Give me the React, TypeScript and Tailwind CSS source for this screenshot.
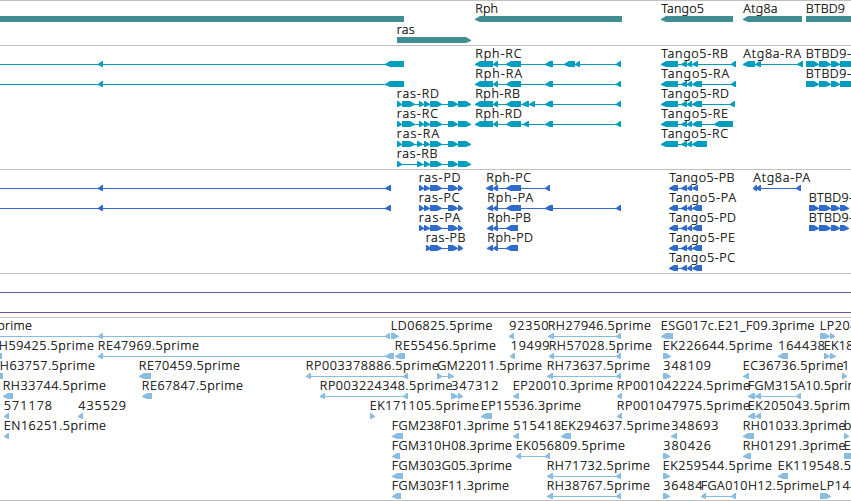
type Dir = "l" | "r";

interface Feature {
  row: number;
  dir: Dir;
  exons: [number, number][];
  label?: string;
  // Left and right edge of the label
  at?: [number, number];
}

interface TrackProps {
  features: Feature[];
  fill: string;
  height: string;
  labelY: number;
  pitch?: number;
}

const GENES: Feature[] = [
  { row: 0, dir: "l", exons: [[-10, 404]] },
  { row: 0, dir: "l", exons: [[475, 622]], label: "Rph", at: [475, 498] },
  { row: 0, dir: "l", exons: [[661, 733]], label: "Tango5", at: [661, 704] },
  { row: 0, dir: "l", exons: [[743, 802]], label: "Atg8a", at: [743, 777.5] },
  { row: 0, dir: "r", exons: [[806, 860]], label: "BTBD9", at: [805.5, 845] },
  { row: 1, dir: "r", exons: [[397, 471]], label: "ras", at: [396.5, 414.5] },
];

const TRANSCRIPTS: Feature[] = [
  { row: 0, dir: "l", exons: [[-10, -4], [98, 103], [385, 404]] },
  { row: 1, dir: "l", exons: [[-10, -4], [98, 103], [385, 404]] },
  { row: 0, dir: "l", label: "Rph-RC", at: [475, 521.5], exons: [[475, 493], [493, 498], [506, 521], [545, 553], [564, 575], [575, 580], [616, 621]] },
  { row: 1, dir: "l", label: "Rph-RA", at: [475, 522], exons: [[475, 493], [493, 498], [506, 521], [545, 553], [616, 621]] },
  { row: 2, dir: "l", label: "Rph-RB", at: [475, 520], exons: [[475, 493], [493, 498], [506, 521], [522, 529], [529, 535], [545, 553], [616, 621]] },
  { row: 3, dir: "l", label: "Rph-RD", at: [475, 522], exons: [[475, 493], [493, 498], [506, 521], [523, 529], [545, 553], [616, 621]] },
  { row: 2, dir: "r", label: "ras-RD", at: [396.5, 439], exons: [[397, 402], [402, 415], [419, 424], [424, 430], [430, 442], [448, 458], [458, 471]] },
  { row: 3, dir: "r", label: "ras-RC", at: [396.5, 438], exons: [[397, 402], [402, 415], [419, 424], [424, 430], [430, 442], [448, 458], [458, 471]] },
  { row: 4, dir: "r", label: "ras-RA", at: [396.5, 439], exons: [[397, 402], [402, 415], [417, 423], [424, 430], [430, 442], [448, 458], [458, 471]] },
  { row: 5, dir: "r", label: "ras-RB", at: [396.5, 437.5], exons: [[397, 402], [417, 423], [424, 430], [430, 442], [448, 458], [458, 471]] },
  { row: 0, dir: "l", label: "Tango5-RB", at: [661, 728], exons: [[661, 678], [681, 687], [687, 692], [692, 698], [731, 736]] },
  { row: 1, dir: "l", label: "Tango5-RA", at: [661, 729], exons: [[661, 678], [681, 687], [687, 692], [692, 702], [731, 736]] },
  { row: 2, dir: "l", label: "Tango5-RD", at: [661, 729], exons: [[661, 678], [681, 687], [687, 692], [692, 702], [730, 735]] },
  { row: 3, dir: "l", label: "Tango5-RE", at: [661, 728], exons: [[661, 678], [681, 687], [687, 692], [692, 702], [714, 733]] },
  { row: 4, dir: "l", label: "Tango5-RC", at: [661, 728], exons: [[661, 678], [681, 687], [687, 692], [692, 707]] },
  { row: 0, dir: "l", label: "Atg8a-RA", at: [743, 801], exons: [[743, 755], [755, 761], [797, 803]] },
  { row: 0, dir: "r", label: "BTBD9-", at: [805.5, 851], exons: [[806, 819], [819, 831], [831, 840], [840, 860]] },
  { row: 1, dir: "r", label: "BTBD9-", at: [805.5, 851], exons: [[806, 819], [819, 831], [831, 840], [840, 860]] },
];

const PROTEINS: Feature[] = [
  { row: 0, dir: "l", exons: [[-10, -4], [98, 103], [385, 391]] },
  { row: 1, dir: "l", exons: [[-10, -4], [98, 103], [385, 391]] },
  { row: 0, dir: "r", label: "ras-PD", at: [418.5, 460.5], exons: [[419, 424], [424, 430], [430, 442], [448, 458], [458, 463]] },
  { row: 1, dir: "r", label: "ras-PC", at: [418.5, 459.5], exons: [[419, 424], [424, 430], [430, 442], [448, 458], [458, 463]] },
  { row: 2, dir: "r", label: "ras-PA", at: [418.5, 460], exons: [[419, 424], [424, 430], [430, 442], [448, 458], [458, 463]] },
  { row: 3, dir: "r", label: "ras-PB", at: [425.5, 465.5], exons: [[426, 431], [430, 442], [448, 458], [458, 463]] },
  { row: 0, dir: "l", label: "Rph-PC", at: [486, 531], exons: [[486, 493], [493, 498], [506, 521], [545, 550]] },
  { row: 1, dir: "l", label: "Rph-PA", at: [487, 533], exons: [[487, 493], [493, 498], [506, 521], [545, 553], [616, 621]] },
  { row: 2, dir: "l", label: "Rph-PB", at: [487, 531], exons: [[487, 493], [493, 498], [506, 518]] },
  { row: 3, dir: "l", label: "Rph-PD", at: [487, 533], exons: [[487, 493], [493, 498], [506, 518]] },
  { row: 0, dir: "l", label: "Tango5-PB", at: [669, 734.5], exons: [[669, 678], [681, 687], [687, 692], [692, 698]] },
  { row: 1, dir: "l", label: "Tango5-PA", at: [669, 736], exons: [[669, 678], [681, 687], [687, 692], [692, 702]] },
  { row: 2, dir: "l", label: "Tango5-PD", at: [669, 736], exons: [[669, 678], [681, 687], [687, 692], [692, 702]] },
  { row: 3, dir: "l", label: "Tango5-PE", at: [669, 735], exons: [[669, 678], [681, 687], [687, 692], [692, 702]] },
  { row: 4, dir: "l", label: "Tango5-PC", at: [669, 735], exons: [[669, 678], [681, 687], [687, 692], [692, 702]] },
  { row: 0, dir: "l", label: "Atg8a-PA", at: [753, 810], exons: [[753, 757], [756, 761], [796, 801]] },
  { row: 1, dir: "r", label: "BTBD9-", at: [808.5, 853], exons: [[809, 819], [819, 831], [831, 840], [840, 849]] },
  { row: 2, dir: "r", label: "BTBD9-", at: [808.5, 853], exons: [[809, 819], [819, 831], [831, 840], [840, 849]] },
];

const ESTS: Feature[] = [
  { row: 0, dir: "l", label: "prime", at: [-3, 32], exons: [[-10, -4], [98, 103], [385, 390]] },
  { row: 0, dir: "r", label: "LD06825.5prime", at: [390.5, 492.5], exons: [[391, 399]] },
  { row: 0, dir: "l", label: "92350", at: [509, 548.5], exons: [[509, 514]] },
  { row: 0, dir: "l", label: "RH27946.5prime", at: [547.5, 651], exons: [[548, 554], [616, 621]] },
  { row: 0, dir: "l", label: "ESG017c.E21_F09.3prime", at: [660.5, 814.5], exons: [[661, 673]] },
  { row: 0, dir: "r", label: "LP204", at: [819.5, 857.5], exons: [[820, 830], [830, 835]] },

  { row: 1, dir: "l", label: "H59425.5prime", at: [-1.5, 94], exons: [[-10, 2]] },
  { row: 1, dir: "l", label: "RE47969.5prime", at: [97.5, 199], exons: [[98, 103], [385, 394]] },
  { row: 1, dir: "l", label: "RE55456.5prime", at: [394.5, 496], exons: [[395, 405]] },
  { row: 1, dir: "l", label: "19499", at: [510.5, 549.5], exons: [[510, 515]] },
  { row: 1, dir: "l", label: "RH57028.5prime", at: [548.5, 652], exons: [[549, 554], [616, 621]] },
  { row: 1, dir: "r", label: "EK226644.5prime", at: [662.5, 772.5], exons: [[663, 671]] },
  { row: 1, dir: "l", label: "164438", at: [778, 825], exons: [[778, 788]] },
  { row: 1, dir: "r", label: "EK18", at: [823.5, 853.5], exons: [[824, 830], [830, 836]] },

  { row: 2, dir: "l", label: "H63757.5prime", at: [-0.5, 95], exons: [[-10, 3]] },
  { row: 2, dir: "l", label: "RE70459.5prime", at: [138.5, 240], exons: [[139, 151]] },
  { row: 2, dir: "l", label: "RP003378886.5prime", at: [305.5, 439], exons: [[306, 311], [403, 408]] },
  { row: 2, dir: "r", label: "GM22011.5prime", at: [437, 542], exons: [[437, 442], [448, 454]] },
  { row: 2, dir: "l", label: "RH73637.5prime", at: [546.5, 650], exons: [[547, 553], [616, 621]] },
  { row: 2, dir: "r", label: "348109", at: [663, 711], exons: [[663, 671]] },
  { row: 2, dir: "l", label: "EC36736.5prime", at: [742.5, 843.5], exons: [[743, 749]] },
  { row: 2, dir: "r", label: "1", at: [842, 849.5], exons: [[842, 847]] },

  { row: 3, dir: "l", label: "RH33744.5prime", at: [2.5, 106], exons: [[3, 13]] },
  { row: 3, dir: "l", label: "RE67847.5prime", at: [141.5, 243], exons: [[142, 152]] },
  { row: 3, dir: "l", label: "RP003224348.5prime", at: [319.5, 452.5], exons: [[320, 325], [403, 408]] },
  { row: 3, dir: "r", label: "347312", at: [451, 498.5], exons: [[451, 458], [458, 463]] },
  { row: 3, dir: "l", label: "EP20010.3prime", at: [512.5, 613], exons: [[513, 519]] },
  { row: 3, dir: "l", label: "RP001042224.5prime", at: [616.5, 750], exons: [[617, 622]] },
  { row: 3, dir: "l", label: "FGM315A10.5prime", at: [747.5, 866], exons: [[748, 755], [755, 761], [796, 801]] },

  { row: 4, dir: "l", label: "571178", at: [3.5, 52], exons: [[4, 9]] },
  { row: 4, dir: "l", label: "435529", at: [78, 126], exons: [[78, 83]] },
  { row: 4, dir: "r", label: "EK171105.5prime", at: [369.5, 479], exons: [[370, 375]] },
  { row: 4, dir: "l", label: "EP15536.3prime", at: [480.5, 581], exons: [[481, 492]] },
  { row: 4, dir: "l", label: "RP001047975.5prime", at: [616.5, 750], exons: [[617, 622]] },
  { row: 4, dir: "l", label: "EK205043.5prime", at: [747.5, 857.5], exons: [[748, 755], [755, 761]] },

  { row: 5, dir: "l", label: "EN16251.5prime", at: [3.5, 106], exons: [[4, 9]] },
  { row: 5, dir: "l", label: "FGM238F01.3prime", at: [391.5, 509], exons: [[392, 403]] },
  { row: 5, dir: "l", label: "515418", at: [513, 561], exons: [[513, 519]] },
  { row: 5, dir: "l", label: "EK294637.5prime", at: [560.5, 670], exons: [[561, 571]] },
  { row: 5, dir: "l", label: "348693", at: [671, 718.5], exons: [[671, 677]] },
  { row: 5, dir: "l", label: "RH01033.3prime", at: [742.5, 845.5], exons: [[743, 754]] },
  { row: 5, dir: "r", label: "b", at: [843.5, 851], exons: [[844, 849]] },

  { row: 6, dir: "l", label: "FGM310H08.3prime", at: [391.5, 512], exons: [[392, 400]] },
  { row: 6, dir: "l", label: "EK056809.5prime", at: [515.5, 625], exons: [[516, 521], [545, 550]] },
  { row: 6, dir: "r", label: "380426", at: [663, 711], exons: [[663, 670]] },
  { row: 6, dir: "l", label: "RH01291.3prime", at: [742.5, 845.5], exons: [[743, 751]] },
  { row: 6, dir: "r", label: "E", at: [843.5, 850.5], exons: [[844, 860]] },

  { row: 7, dir: "l", label: "FGM303G05.3prime", at: [391.5, 512], exons: [[392, 403]] },
  { row: 7, dir: "l", label: "RH71732.5prime", at: [546.5, 650], exons: [[547, 553], [616, 621]] },
  { row: 7, dir: "r", label: "EK259544.5prime", at: [662.5, 772], exons: [[663, 670]] },
  { row: 7, dir: "l", label: "EK119548.5prime", at: [777.5, 887.5], exons: [[778, 788]] },

  { row: 8, dir: "l", label: "FGM303F11.3prime", at: [391.5, 509], exons: [[392, 401]] },
  { row: 8, dir: "l", label: "RH38767.5prime", at: [546.5, 650], exons: [[547, 553], [616, 621]] },
  { row: 8, dir: "r", label: "36484", at: [663, 702.5], exons: [[663, 670]] },
  { row: 8, dir: "l", label: "FGA010H12.5prime", at: [700.5, 819], exons: [[701, 706], [731, 736]] },
  { row: 8, dir: "r", label: "LP144", at: [819.5, 857.5], exons: [[820, 831]] },
];

/** Arrow-headed block, 6px tall, pointing along the strand */
function exonPoints([from, to]: [number, number], y: number, dir: Dir) {
  const head = Math.min(to - from - 1, 5);
  const [tip, tail] = dir === "l" ? [from, to] : [to, from];
  const neck = dir === "l" ? from + head : to - head;
  return `${tip},${y + 3} ${neck},${y} ${tail},${y} ${tail},${y + 6} ${neck},${y + 6} ${tip},${y + 4}`;
}

function Track({ features, fill, height, labelY, pitch = 20 }: TrackProps) {
  return (
    <section className={`w-full shrink-0 overflow-hidden border-t border-[#c0c0c0] ${height}`}>
      <svg className={`block h-full w-[851px] ${fill}`}>
        {features.map((f, i) => {
          const base = labelY + f.row * pitch;
          const start = f.exons[0][0];
          const end = f.exons[f.exons.length - 1][1];
          return (
            <g key={i}>
              {f.exons.length > 1 && (
                <rect x={start + 2} y={base + 6} width={end - start - 4} height={1} />
              )}
              {f.exons.map((exon, j) => (
                <polygon key={j} points={exonPoints(exon, base + 3, f.dir)} />
              ))}
              {f.label && f.at && (
                <text
                  x={f.at[0] + 0.3}
                  y={base}
                  textLength={f.at[1] - f.at[0] - 0.3}
                  className="fill-black stroke-black stroke-[0.2px] font-['Noto_Sans',sans-serif] text-[12.5px] font-light"
                >
                  {f.label}
                </text>
              )}
            </g>
          );
        })}
      </svg>
    </section>
  );
}

export default function App() {
  return (
    <main className="flex h-[501px] w-[851px] flex-col overflow-hidden border-b border-[#c0c0c0] bg-white">
      <Track features={GENES} fill="fill-[#408e93]" height="h-[45px]" labelY={12} pitch={21} />
      <Track features={TRANSCRIPTS} fill="fill-[#009dbe]" height="h-[124px]" labelY={12} />
      <Track features={PROTEINS} fill="fill-[#306bcb]" height="h-[104px]" labelY={12} />

      {/* Coverage lines */}
      <section className="h-[44px] w-full shrink-0 border-t border-[#c0c0c0] pt-[18px]">
        <div className="h-[21px] border-y border-[#7253a6]" />
      </section>

      <Track features={ESTS} fill="fill-[#88bddf]" height="h-[183px]" labelY={12} />
    </main>
  );
}
